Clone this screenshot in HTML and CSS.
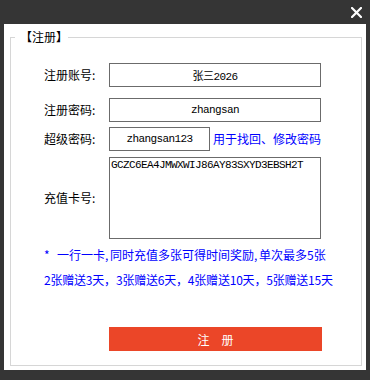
FILE: index.html
```html
<!DOCTYPE html>
<html lang="zh-CN">
<head>
    <meta charset="UTF-8">
    <meta name="viewport" content="width=device-width, initial-scale=1.0">
    <title>注册</title>
    <link rel="stylesheet" href="styles.css">
</head>
<body>
    <div class="titlebar">
        <button class="close" title="关闭">
            <svg width="11" height="11" viewBox="0 0 11 11">
                <path d="M1 1 L10 10 M10 1 L1 10" stroke="#fff" stroke-width="2.2" stroke-linecap="square"/>
            </svg>
        </button>
    </div>

    <div class="panel">
        <fieldset class="group">
            <legend>【注册】</legend>

            <!-- account -->
            <div class="row row-account">
                <label for="account">注册账号:</label>
                <input type="text" id="account" class="field" value="张三2026">
            </div>

            <div class="row row-password">
                <label for="password">注册密码:</label>
                <input type="text" id="password" class="field" value="zhangsan">
            </div>

            <div class="row row-super">
                <label for="super">超级密码:</label>
                <div class="super-line">
                    <input type="text" id="super" class="field field-short" value="zhangsan123">
                    <span class="hint">用于找回、修改密码</span>
                </div>
            </div>

            <!-- recharge cards -->
            <div class="row row-card">
                <label for="cards">充值卡号:</label>
                <textarea id="cards" class="cards">GCZC6EA4JMWXWIJ86AY83SXYD3EBSH2T</textarea>
            </div>

            <p class="note note-first"><span class="star">*</span>一行一卡<span class="comma">,</span>同时充值多张可得时间奖励<span class="comma">,</span>单次最多5张</p>
            <p class="note note-second">2张赠送3天，3张赠送6天，4张赠送10天，5张赠送15天</p>

            <div class="actions">
                <button type="submit" class="submit">注册</button>
            </div>
        </fieldset>
    </div>
</body>
</html>
```

FILE: styles.css
```css
/* General */
body {
    margin: 0;
    padding: 0;
    background-color: #353535;
    font-family: "Noto Sans CJK SC", "Liberation Sans", sans-serif;
    font-size: 12px;
    color: #000;
    overflow: hidden;
    text-autospace: no-autospace;
}

/* Title bar */
.titlebar {
    height: 24px;
    display: flex;
    justify-content: flex-end;
    align-items: center;
    padding-right: 8px;
}

.close {
    width: 11px;
    height: 11px;
    padding: 0;
    margin-top: 1px;
    border: none;
    background: none;
    display: flex;
    cursor: pointer;
}

/* White panel */
.panel {
    background-color: #fff;
    margin: 0 4px 0 4px;
    height: 346px;
    display: flex;
    flex-direction: column;
}

.group {
    box-sizing: border-box;
    height: 337px;
    margin: 5px 4px 0 6px;
    padding: 18px 0 0 33px;
    border: 1px solid #d6d6d6;
}

.group legend {
    line-height: 16px;
    padding: 0 0 0 5px;
    margin-left: -29px;
    font-size: 12px;
}

/* Rows */
.row {
    display: grid;
    grid-template-columns: 65px auto;
    align-items: center;
}

.row label {
    line-height: 16px;
    white-space: nowrap;
}

.row-password {
    margin-top: 11px;
}

.row-super {
    margin-top: 5px;
}

.row-card {
    margin-top: 6px;
}

.field {
    box-sizing: border-box;
    width: 212px;
    height: 24px;
    margin: 0;
    padding: 0 2px;
    border: 1px solid #6b6b6b;
    border-radius: 0;
    text-align: center;
    font-family: "Liberation Mono", "Noto Sans CJK SC", monospace;
    font-size: 11px;
    letter-spacing: -0.6px;
    color: #000;
    outline: none;
}

.field-short {
    width: 101px;
}

.super-line {
    display: flex;
    align-items: center;
    gap: 3px;
}

.hint {
    color: #0000ff;
    font-size: 12px;
    line-height: 16px;
    white-space: nowrap;
}

.cards {
    box-sizing: border-box;
    width: 212px;
    height: 82px;
    margin: 0;
    padding: 1px 1px;
    border: 1px solid #6b6b6b;
    border-radius: 0;
    resize: none;
    font-family: "Liberation Mono", monospace;
    font-size: 11px;
    letter-spacing: -0.6px;
    line-height: 13px;
    color: #000;
    outline: none;
    overflow: hidden;
}

/* Notes */
.note {
    margin: 0;
    color: #0000ff;
    line-height: 16px;
    white-space: nowrap;
}

.star {
    display: inline-block;
    width: 13px;
}

.comma {
    display: inline-block;
    width: 5px;
}

.note-first {
    margin-top: 8px;
}

.note-second {
    margin-top: 9px;
    letter-spacing: -0.2px;
}

/* Submit */
.actions {
    margin-top: 39px;
    padding-left: 65px;
}

.submit {
    width: 213px;
    height: 24px;
    padding: 0 0 0 12px;
    border: none;
    border-radius: 0;
    background-color: #eb4628;
    color: #fff;
    font-family: "Noto Sans CJK SC", sans-serif;
    font-size: 12px;
    letter-spacing: 12px;
    cursor: pointer;
}
```
